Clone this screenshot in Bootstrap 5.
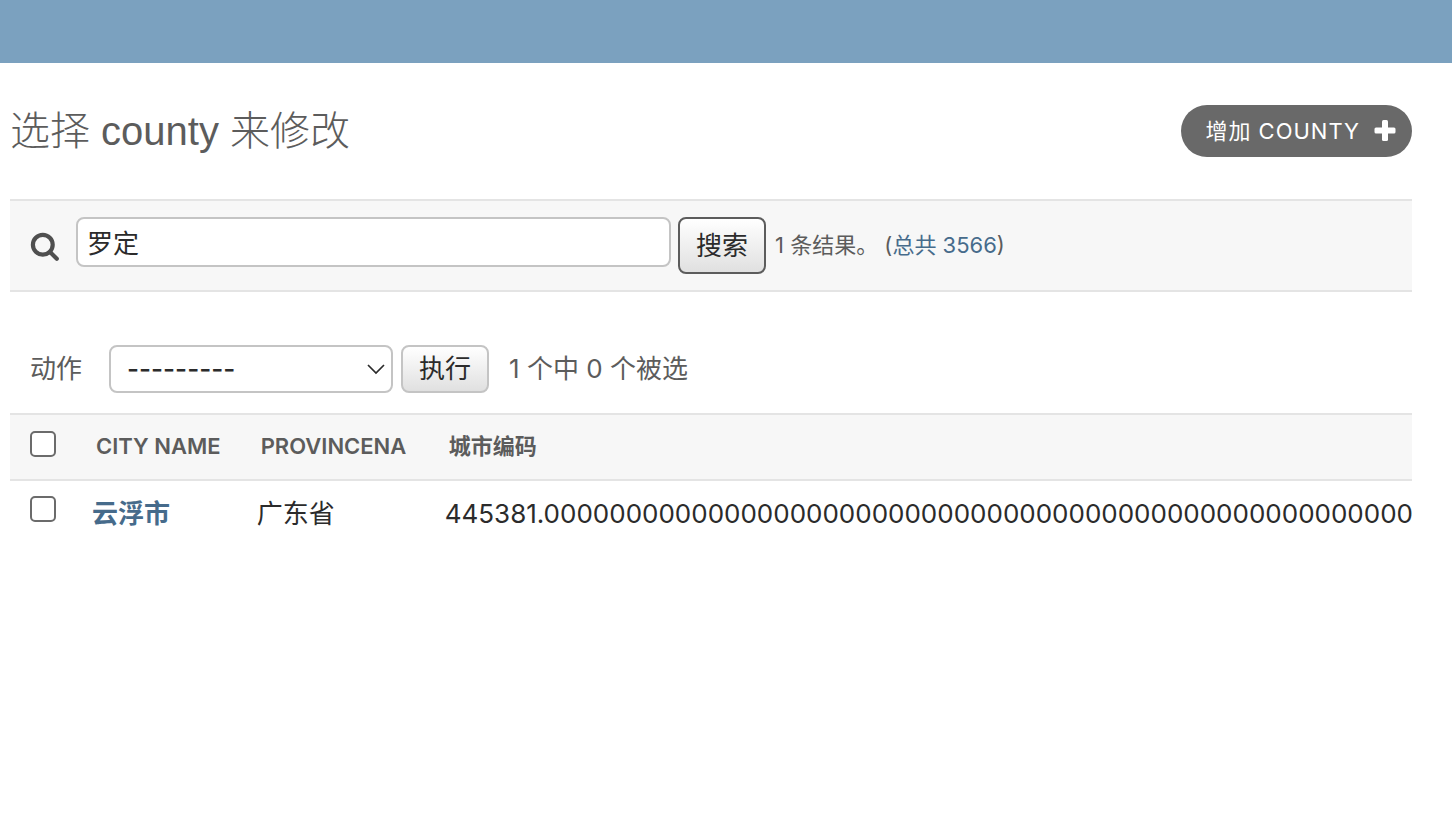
<!DOCTYPE html>
<html lang="zh-CN">
<head>
<meta charset="utf-8">
<meta name="viewport" content="width=device-width, initial-scale=1">
<title>选择 county 来修改</title>
<link href="https://cdn.jsdelivr.net/npm/bootstrap@5.3.0/dist/css/bootstrap.min.css" rel="stylesheet">
<style>
  body { font-family: Inter, "Noto Sans CJK SC", sans-serif; font-size: 26px; line-height: 36px; color: #2b2b2b; background: #fff; }
  a { color: #466b8b; text-decoration: none; }
  .top-bar { height: 63px; background: #7ba1bf; }
  .page-main { padding: 42px 40px 0 10px; }
  .page-title { font-family: "Liberation Sans", "Noto Sans CJK SC", sans-serif; font-size: 40px; font-weight: 300; line-height: 52px; color: #5c5c5c; }
  .add-link { height: 52px; padding: 0 16px 0 24px; gap: 14px; background: #696969; color: #fff; font-size: 22px; letter-spacing: 1px; }
  .add-link:hover { color: #fff; background: #555; }
  .search-bar { margin-top: 42px; padding: 16px 20px; gap: 7px; background: #f7f7f7; border: solid #e4e4e4; border-width: 2px 0; }
  .search-icon { margin: 15px 9px 0 0; }
  .field-box { border: 2px solid #c4c4c4; border-radius: 8px; font-size: 26px; line-height: 36px; color: #2b2b2b; background-color: #fff; }
  .search-input { flex: 0 1 595px; min-width: 0; height: 50px; padding: 0 9px 2px; }
  .grad-btn { padding: 0 16px; border: 2px solid #c4c4c4; border-radius: 8px; font-size: 26px; line-height: 36px; color: #2b2b2b; background: linear-gradient(#fff, #e0e0e0); }
  .search-btn { height: 57px; border-color: #5c5c5c; }
  .quiet { color: #5c5c5c; }
  .result-note { padding-left: 2px; font-size: 22px; line-height: 56px; }
  .actions { margin-top: 53px; padding: 0 20px 20px; gap: 8px; }
  .action-label { margin-right: 19px; }
  .action-select { width: 284px; height: 48px; padding: 0 40px 0 16px; font-weight: 500; appearance: none; background: #fff url("data:image/svg+xml,%3Csvg xmlns='http://www.w3.org/2000/svg' width='18' height='11' fill='none' stroke='%232b2b2b' stroke-width='1.700'%3E%3Cpath d='M1 1l8 8 8-8'/%3E%3C/svg%3E") no-repeat right 6px center; }
  .action-btn { height: 48px; }
  .result-table { white-space: nowrap; }
  .result-table th, .result-table td { vertical-align: top; }
  .result-table thead tr { background: #f7f7f7; border: solid #e4e4e4; border-width: 2px 0; }
  .result-table thead th { padding: 13px 20px 15px; font-size: 22px; font-weight: 600; color: #5c5c5c; }
  .result-table thead .province-col { min-width: 188px; }
  .result-table tbody th, .result-table tbody td { padding: 15px 16px; font-weight: 400; }
  .result-table tbody th { font-weight: 700; }
  .result-table thead .check-cell { padding: 16px 20px; line-height: 0; }
  .result-table tbody .check-cell { padding: 15px 20px; line-height: 0; }
  .row-check { appearance: none; width: 26px; height: 26px; margin: 0; border: 2px solid #6b6b6b; border-radius: 5px; background: #fff; }
  .row-check:checked { background: #466b8b; }
</style>
</head>
<body>
<header class="top-bar"></header>
<main class="page-main">
  <div class="d-flex justify-content-between align-items-center">
    <h1 class="page-title m-0">选择 county 来修改</h1>
    <a href="#" class="add-link d-flex align-items-center rounded-pill">增加 COUNTY
      <svg width="22" height="22" viewBox="0 0 22 22" fill="#fff" aria-hidden="true"><rect x="8" y="0" width="6" height="21" rx="1.500"/><rect x="0.500" y="7.500" width="21" height="6" rx="1.500"/></svg>
    </a>
  </div>

  <form class="search-bar d-flex align-items-start" role="search" onsubmit="return false">
    <label for="searchbar" class="search-icon lh-1 d-flex">
      <svg width="30" height="30" viewBox="0 0 30 30" fill="none" stroke="#4f4f4f" aria-label="搜索"><circle cx="12.800" cy="12.800" r="9.900" stroke-width="4.200"/><path d="M20 20l6.800 6.800" stroke-width="4.200" stroke-linecap="round"/></svg>
    </label>
    <input id="searchbar" type="text" class="field-box search-input" value="罗定">
    <button type="submit" class="grad-btn search-btn">搜索</button>
    <span class="result-note quiet">1 条结果。 (<a href="#">总共 3566</a>)</span>
  </form>

  <div class="actions d-flex align-items-center">
    <label for="action" class="action-label quiet">动作</label>
    <select id="action" class="field-box action-select"><option>---------</option></select>
    <button type="button" class="grad-btn action-btn">执行</button>
    <span class="quiet ps-2 ms-1">1 个中 0 个被选</span>
  </div>

  <div class="overflow-hidden">
    <table class="result-table w-100">
      <thead>
        <tr>
          <th class="check-cell"><input type="checkbox" class="row-check" aria-label="全选"></th>
          <th scope="col">CITY NAME</th>
          <th scope="col" class="province-col">PROVINCENA</th>
          <th scope="col">城市编码</th>
        </tr>
      </thead>
      <tbody>
        <tr>
          <td class="check-cell"><input type="checkbox" class="row-check" aria-label="选择 云浮市"></td>
          <th scope="row"><a href="#">云浮市</a></th>
          <td>广东省</td>
          <td>445381.000000000000000000000000000000000000000000000000000000000000</td>
        </tr>
      </tbody>
    </table>
  </div>
</main>
<script src="https://cdn.jsdelivr.net/npm/bootstrap@5.3.0/dist/js/bootstrap.bundle.min.js"></script>
</body>
</html>
